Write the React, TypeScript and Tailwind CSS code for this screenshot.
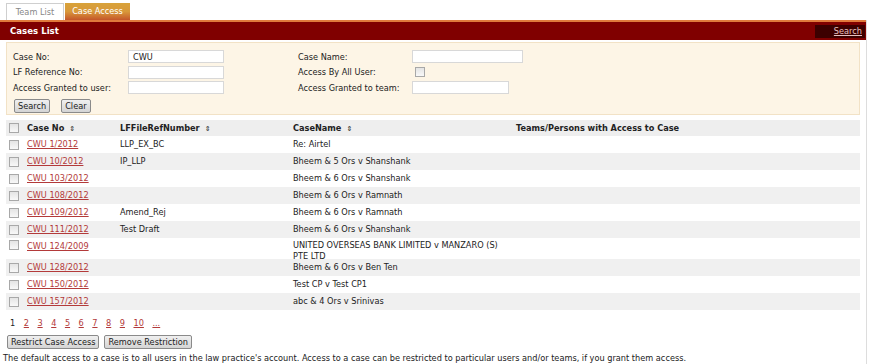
import React from "react";

const rows: { no: string; ref: string; name: React.ReactNode; tall?: boolean }[] = [
  { no: "CWU 1/2012", ref: "LLP_EX_BC", name: "Re: Airtel" },
  { no: "CWU 10/2012", ref: "IP_LLP", name: "Bheem & 5 Ors v Shanshank" },
  { no: "CWU 103/2012", ref: "", name: "Bheem & 6 Ors v Shanshank" },
  { no: "CWU 108/2012", ref: "", name: "Bheem & 6 Ors v Ramnath" },
  { no: "CWU 109/2012", ref: "Amend_Rej", name: "Bheem & 6 Ors v Ramnath" },
  { no: "CWU 111/2012", ref: "Test Draft", name: "Bheem & 6 Ors v Shanshank" },
  {
    no: "CWU 124/2009",
    ref: "",
    name: (
      <>
        UNITED OVERSEAS BANK LIMITED v MANZARO (S)
        <br />
        PTE LTD
      </>
    ),
    tall: true,
  },
  { no: "CWU 128/2012", ref: "", name: "Bheem & 6 Ors v Ben Ten" },
  { no: "CWU 150/2012", ref: "", name: "Test CP v Test CP1" },
  { no: "CWU 157/2012", ref: "", name: "abc & 4 Ors v Srinivas" },
];

function Box() {
  return (
    <span className="inline-block w-[10px] h-[10px] border border-[#a8a8a8] bg-gradient-to-b from-[#e4e4e4] to-[#f8f8f8] align-middle" />
  );
}

function Input({ w, value }: { w: string; value?: string }) {
  return (
    <div className={`${w} h-[13px] border border-[#d8d8d8] bg-white px-[4px] leading-[12px] text-[8.2px]`}>
      {value}
    </div>
  );
}

function Sort() {
  return <span className="ml-[5px] text-[7px] font-normal">⇕</span>;
}

function Btn({ children }: { children: React.ReactNode }) {
  return (
    <button className="h-[14px] px-[3px] border border-[#8a8a8a] rounded-[2px] bg-gradient-to-b from-[#f0f0f0] to-[#d4d4d4] text-[8.2px] leading-[12px] text-[#222]">
      {children}
    </button>
  );
}

export default function App() {
  return (
    <div
      className="w-[872px] h-[364px] bg-white text-[8.2px] text-[#222] relative overflow-hidden"
      style={{ fontFamily: '"DejaVu Sans", Verdana, sans-serif' }}
    >
      {/* tabs */}
      <div className="flex pl-[6px] pt-[3px] h-[20px] items-end">
        <div className="h-[17px] w-[58px] border border-b-0 border-[#cfcfcf] bg-white text-[#888] flex items-center justify-center leading-none">
          Team List
        </div>
        <div className="h-[17px] w-[65px] ml-[1px] bg-gradient-to-b from-[#d8a23a] via-[#d8983a] to-[#c4562a] text-white flex items-center justify-center leading-none">
          Case Access
        </div>
      </div>
      <div className="w-[867px] border-r border-[#dddddd]">
        {/* red bar */}
        <div className="h-[20px] bg-[#800000] border-t-[2px] border-[#e07a3c] flex items-center justify-between">
          <span className="ml-[10px] text-white font-bold text-[8.6px]">Cases List</span>
          <span className="mr-[1px] w-[50px] h-[13px] bg-[#3c0000] text-[#e8c0c0] underline text-right pr-[3px] leading-[13px]">
            Search
          </span>
        </div>
        {/* filter panel */}
        <div className="mx-[6px] mt-[2px] h-[73px] bg-[#fdf5e6] border border-[#f2e2c6] pl-[6px] pt-[6px]">
          <div className="flex">
            <div className="w-[285px]">
              <div className="flex items-center h-[15.5px]">
                <span className="w-[115px]">Case No:</span>
                <Input w="w-[96px]" value="CWU" />
              </div>
              <div className="flex items-center h-[15.5px]">
                <span className="w-[115px]">LF Reference No:</span>
                <Input w="w-[96px]" />
              </div>
              <div className="flex items-center h-[15.5px]">
                <span className="w-[115px]">Access Granted to user:</span>
                <Input w="w-[96px]" />
              </div>
            </div>
            <div>
              <div className="flex items-center h-[15.5px]">
                <span className="w-[114px]">Case Name:</span>
                <Input w="w-[111px]" />
              </div>
              <div className="flex items-center h-[15.5px]">
                <span className="w-[117px]">Access By All User:</span>
                <Box />
              </div>
              <div className="flex items-center h-[15.5px]">
                <span className="w-[114px]">Access Granted to team:</span>
                <Input w="w-[97px]" />
              </div>
            </div>
          </div>
          <div className="flex gap-[11px] mt-[3px] ml-[1px]">
            <Btn>Search</Btn>
            <Btn>Clear</Btn>
          </div>
        </div>
        {/* table */}
        <div className="mx-[6px] mt-[5px]">
          <div className="flex items-center h-[16px] bg-[#eeeeee] font-bold">
            <span className="w-[21px] pl-[3px] flex"><Box /></span>
            <span className="w-[93px]">Case No<Sort /></span>
            <span className="w-[173px]">LFFileRefNumber<Sort /></span>
            <span className="w-[223px]">CaseName<Sort /></span>
            <span>Teams/Persons with Access to Case</span>
          </div>
          {rows.map((r, i) => (
            <div
              key={r.no}
              className={`flex ${r.tall ? "items-start h-[21px] pt-[2px]" : "items-center h-[17px]"} ${
                i % 2 === 1 ? "bg-[#f0f0f0]" : "bg-white"
              }`}
            >
              <span className="w-[21px] pl-[3px] flex"><Box /></span>
              <span className="w-[93px] text-[#b33a3a] underline">{r.no}</span>
              <span className="w-[173px]">{r.ref}</span>
              <span className="w-[223px] leading-[10.5px] whitespace-nowrap">{r.name}</span>
            </div>
          ))}
        </div>
        {/* pagination */}
        <div className="flex gap-[8.5px] ml-[10px] mt-[7px] h-[12px] items-center">
          <span>1</span>
          {["2", "3", "4", "5", "6", "7", "8", "9", "10", "..."].map((p) => (
            <span key={p} className="text-[#b33a3a] underline">
              {p}
            </span>
          ))}
        </div>
        <div className="flex gap-[5px] ml-[7px] mt-[6px]">
          <Btn>Restrict Case Access</Btn>
          <Btn>Remove Restriction</Btn>
        </div>
        <div className="ml-[3px] mt-[3px] pb-[20px] whitespace-nowrap">
          The default access to a case is to all users in the law practice's account. Access to a case can be restricted to particular users and/or teams, if you grant them access.
        </div>
      </div>
    </div>
  );
}
